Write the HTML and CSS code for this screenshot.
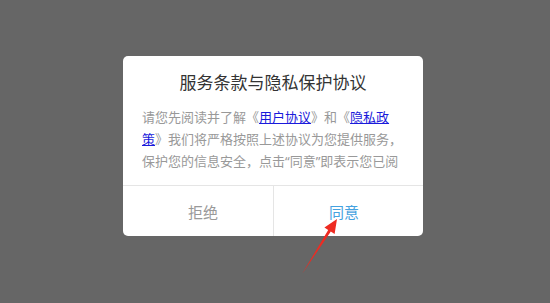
FILE: index.html
```html
<!DOCTYPE html>
<html lang="zh-CN">
<head>
<meta charset="utf-8">
<title>服务条款与隐私保护协议</title>
<link rel="stylesheet" href="styles.css">
</head>
<body>
<div class="dialog">
  <div class="title">服务条款与隐私保护协议</div>
  <div class="content">
    <p>请您先阅读并了解《<a href="#">用户协议</a>》和《<a href="#">隐私政策</a>》我们将严格按照上述协议为您提供服务，保护您的信息安全，点击“同意”即表示您已阅读并同意全部条款。</p>
  </div>
  <div class="actions">
    <div class="btn refuse">拒绝</div>
    <div class="btn agree">同意</div>
  </div>
</div>
<svg class="arrow" width="550" height="303" viewBox="0 0 550 303">
  <polygon points="302,274 328.2,230 324.4,227.6 337,219 334.6,234 330.8,231.6" fill="#ee2b22"/>
</svg>
</body>
</html>
```

FILE: styles.css
```css
html, body {
  margin: 0;
  padding: 0;
}
body {
  width: 550px;
  height: 303px;
  background: #666666;
  font-family: "Noto Sans CJK SC", "Noto Sans", sans-serif;
  padding: 56px 0 0 123px;
  box-sizing: border-box;
  overflow: hidden;
}
.dialog {
  width: 300px;
  height: 180px;
  background: #ffffff;
  border-radius: 5px;
  display: flex;
  flex-direction: column;
  overflow: hidden;
}
.title {
  padding-top: 14px;
  height: 24px;
  line-height: 24px;
  font-size: 17px;
  color: #333333;
  text-align: center;
}
.content {
  margin: 12px 0 13px;
  padding: 0 17px 0 19px;
  height: 66px;
  overflow: hidden;
}
.content p {
  margin: 0;
  font-family: "Noto Sans", "Noto Sans CJK SC", sans-serif;
  font-size: 13px;
  line-height: 22px;
  color: #999999;
}
.content a {
  color: #1a1adb;
  text-decoration: underline;
}
.actions {
  flex: 1;
  display: flex;
  border-top: 1px solid #e5e5e5;
}
.btn {
  flex: 1;
  display: flex;
  align-items: center;
  justify-content: center;
  font-size: 15px;
}
.refuse {
  color: #999999;
  border-right: 1px solid #e5e5e5;
  padding-left: 10px;
}
.agree {
  color: #45a2e0;
  padding-right: 9px;
}
.arrow {
  position: absolute;
  left: 0;
  top: 0;
  pointer-events: none;
}
```
